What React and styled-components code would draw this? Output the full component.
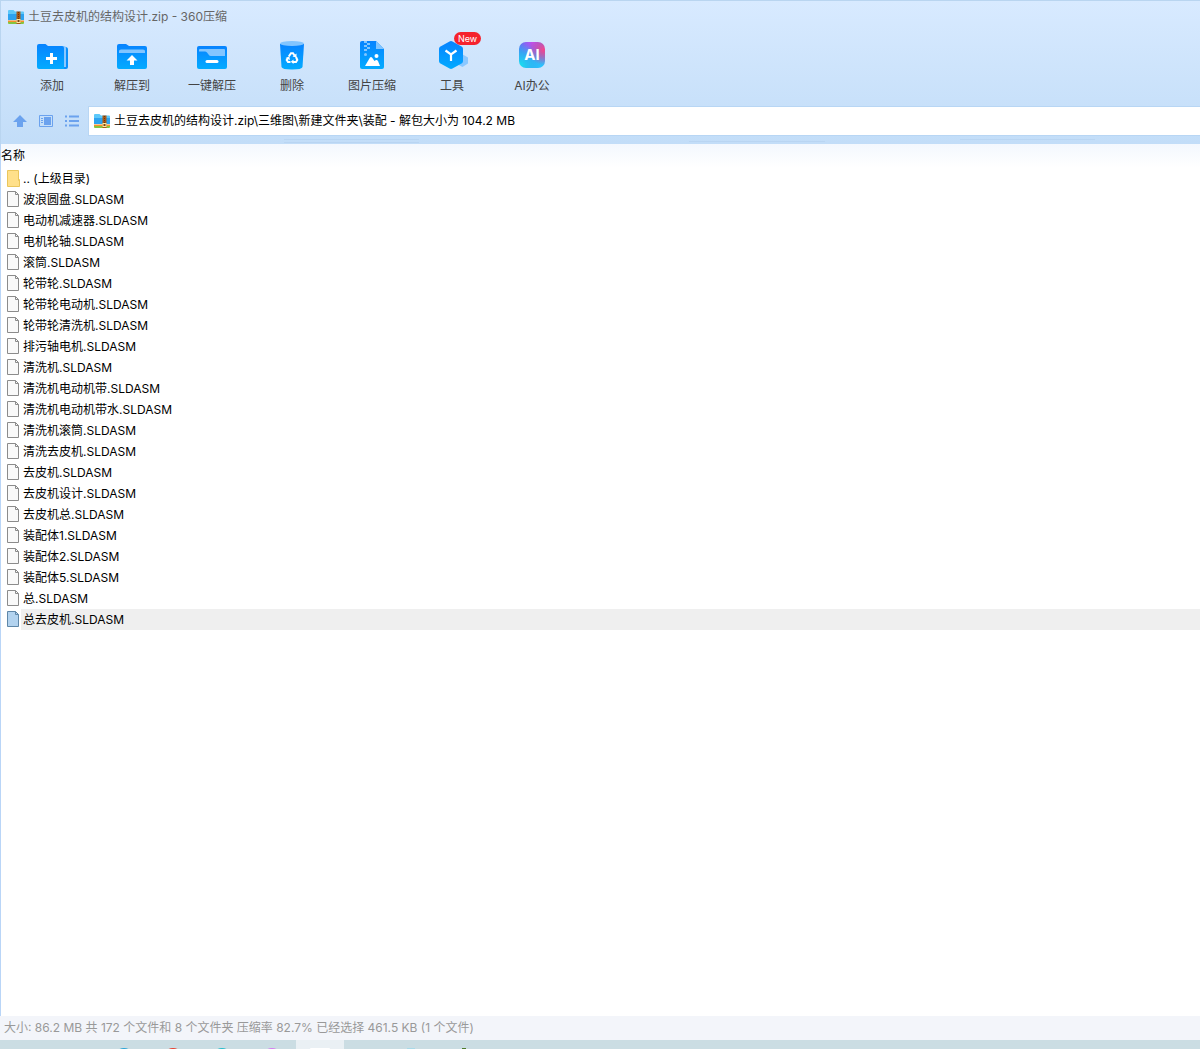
import React from 'react';
import styled, { createGlobalStyle } from 'styled-components';

const files = [
  '波浪圆盘.SLDASM',
  '电动机减速器.SLDASM',
  '电机轮轴.SLDASM',
  '滚筒.SLDASM',
  '轮带轮.SLDASM',
  '轮带轮电动机.SLDASM',
  '轮带轮清洗机.SLDASM',
  '排污轴电机.SLDASM',
  '清洗机.SLDASM',
  '清洗机电动机带.SLDASM',
  '清洗机电动机带水.SLDASM',
  '清洗机滚筒.SLDASM',
  '清洗去皮机.SLDASM',
  '去皮机.SLDASM',
  '去皮机设计.SLDASM',
  '去皮机总.SLDASM',
  '装配体1.SLDASM',
  '装配体2.SLDASM',
  '装配体5.SLDASM',
  '总.SLDASM',
  '总去皮机.SLDASM',
];

const selectedFile = '总去皮机.SLDASM';

const ZipIcon = () => (
  <svg width="16" height="16" viewBox="0 0 16 16" aria-hidden="true">
    <path d="M0 2Q0 1 1 1H5.500L7 2.500H15Q16 2.500 16 3.500V11H0Z" fill="#5cc8fa" />
    <path d="M0 5H16V11H0Z" fill="#2da3f0" />
    <path d="M0 11.500H16V13H0Z" fill="#f7902a" />
    <path d="M0 13H16V14Q16 15 15 15H1Q0 15 0 14Z" fill="#86c440" />
    <path d="M8.500 2.500H12.500V15H8.500Z" fill="#a85a18" />
    <path d="M10.500 3V10" stroke="#6b3510" strokeDasharray="1 1" />
    <rect x="9" y="10.500" width="3" height="3" fill="#7a4312" stroke="#ffe9a0" />
  </svg>
);

const BlueFill = ({ id }) => (
  <defs>
    <linearGradient id={id} x1="0" y1="0" x2="0" y2="1">
      <stop offset="0" stopColor="#0783ff" />
      <stop offset="1" stopColor="#03abff" />
    </linearGradient>
  </defs>
);

const AddIcon = () => (
  <svg width="32" height="32" viewBox="0 0 32 32" aria-hidden="true">
    <BlueFill id="add" />
    <path d="M27 7H29.500Q32 7 32 9.500V27Q32 29 30 29H26Z" fill="#0b90fb" />
    <path d="M25 6H28Q30 6 30 8V27H28Z" fill="#8bc8ff" />
    <path d="M1 6Q1 4 3 4H9.500L12 6H26Q28 6 28 8V29H3Q1 29 1 27Z" fill="url(#add)" />
    <path d="M10 18.500H21M15.500 13V24" stroke="#fff" strokeWidth="3" />
  </svg>
);

const ExtractIcon = () => (
  <svg width="32" height="32" viewBox="0 0 32 32" aria-hidden="true">
    <BlueFill id="extract" />
    <path d="M1 6Q1 4 3 4H10L13 6H29Q31 6 31 8V27Q31 29 29 29H3Q1 29 1 27Z" fill="url(#extract)" />
    <path d="M3 13V11Q3 9.500 5 9.500H27Q29 9.500 29 11V13H3Z" fill="#82c5ff" />
    <path d="M16 15L21.500 20.500H18V25H14V20.500H10.500Z" fill="#fff" />
  </svg>
);

const OneKeyIcon = () => (
  <svg width="32" height="32" viewBox="0 0 32 32" aria-hidden="true">
    <BlueFill id="onekey" />
    <rect x="1" y="6" width="30" height="23" rx="2" fill="url(#onekey)" />
    <path d="M3 11V10Q3 9 4 9H28Q29 9 29 10V16H15Q13.500 16 12.500 14.500L11 12.500Q10 11.500 9 11.500H3Z" fill="#82c5ff" />
    <path d="M11 21.500H21" stroke="#fff" strokeWidth="3" strokeLinecap="round" />
  </svg>
);

const DeleteIcon = () => (
  <svg width="32" height="32" viewBox="0 0 32 32" aria-hidden="true">
    <BlueFill id="delete" />
    <path d="M4 4H28L26.500 27Q26 29.500 16 29.500Q6 29.500 5.500 27Z" fill="url(#delete)" />
    <ellipse cx="16" cy="3.500" rx="12" ry="2.500" fill="#82c5ff" />
    <g fill="none" stroke="#fff" strokeWidth="2">
      <path d="M12.800 16.500L15 13.200H17L18.500 15.500" />
      <path d="M20 17L21.300 20L20 22H16.500" />
      <path d="M14.500 22H12L10.700 20L12 18" />
    </g>
    <path d="M16.500 16.500L20.500 13.500V17.500ZM17.500 19.500V24L14.800 21.800ZM9.500 18L13.300 16.500L14 20Z" fill="#fff" />
  </svg>
);

const ImageIcon = () => (
  <svg width="32" height="32" viewBox="0 0 32 32" aria-hidden="true">
    <BlueFill id="image" />
    <path d="M4 3Q4 1 6 1H20L28 9V27Q28 29 26 29H6Q4 29 4 27Z" fill="url(#image)" />
    <path d="M20 1L28 9H20Z" fill="#82c5ff" />
    <path d="M8 1H11V3H8ZM11 3H14V5H11ZM8 5H11V7H8ZM11 7H14V9H11ZM8 9H11V11H8Z" fill="#82c5ff" />
    <circle cx="9.500" cy="14.500" r="1.500" fill="#82c5ff" />
    <path d="M9 26L14 17.500Q15 16.500 16 17.500L18.500 21L20 20Q21 19.500 22 21L24 26Z" fill="#fff" />
    <circle cx="20.500" cy="16" r="2" fill="#fff" />
  </svg>
);

const ToolsIcon = () => (
  <svg width="32" height="32" viewBox="0 0 32 32" aria-hidden="true">
    <BlueFill id="tools" />
    <path d="M26 14L32 17.500V23.500L26.500 27L20 23.500Z" fill="#8bc8ff" />
    <path d="M13.500 1.500Q15 .7 16.500 1.500L26 6.800Q27 7.500 27 9V21Q27 22.500 26 23.200L16.500 28.500Q15 29.300 13.500 28.500L4 23.200Q3 22.500 3 21V9Q3 7.500 4 6.800Z" fill="url(#tools)" />
    <path d="M9.500 10.500L15 14.500L20.500 10.500M15 14.500V21" fill="none" stroke="#fff" strokeWidth="2.200" />
  </svg>
);

const FileIcon = ({ selected }) => (
  <svg width="12" height="16" viewBox="0 0 12 16" aria-hidden="true">
    <path d="M.5 .5H8.500L11.500 3.500V15.500H.5Z" fill={selected ? '#b3d3ef' : '#f9f9f9'} stroke={selected ? '#5f87a8' : '#8b8b8b'} />
    <path d="M8.500 .5V3.500H11.500" fill="none" stroke={selected ? '#5f87a8' : '#8b8b8b'} />
  </svg>
);

const FolderIcon = () => (
  <svg width="14" height="17" viewBox="0 0 14 17" aria-hidden="true">
    <path d="M.5 .5H11.500V10.500L12.500 9.500V16.500H.5Z" fill="#ffe08a" stroke="#eac65c" />
  </svg>
);

const UpIcon = () => (
  <svg width="14" height="14" viewBox="0 0 14 14" aria-hidden="true">
    <path d="M7 1L14 8H10V13H4V8H0Z" fill="#6ba2ee" />
  </svg>
);

const PreviewIcon = () => (
  <svg width="14" height="14" viewBox="0 0 14 14" aria-hidden="true">
    <path d="M.5 1.500H13.500V12.500H.5Z" fill="none" stroke="#6ba2ee" />
    <path d="M2 4.500H4M2 6.500H4M2 8.500H4" stroke="#6ba2ee" />
    <path d="M5 3H12V11H5Z" fill="#6ba2ee" />
  </svg>
);

const ListIcon = () => (
  <svg width="14" height="14" viewBox="0 0 14 14" aria-hidden="true">
    <path d="M0 2.500H2M0 7H2M0 11.500H2M4 2.500H14M4 7H14M4 11.500H14" stroke="#6ba2ee" strokeWidth="2" />
  </svg>
);

const tools = [
  { label: '添加', icon: <AddIcon /> },
  { label: '解压到', icon: <ExtractIcon /> },
  { label: '一键解压', icon: <OneKeyIcon /> },
  { label: '删除', icon: <DeleteIcon /> },
  { label: '图片压缩', icon: <ImageIcon /> },
  { label: '工具', icon: <ToolsIcon />, badge: 'New' },
];

const App = () => (
  <Window>
    <GlobalStyle />
    <Header>
      <TitleBar>
        <ZipIcon />
        <Title>土豆去皮机的结构设计.zip - 360压缩</Title>
      </TitleBar>
      <Toolbar>
        {tools.map(({ label, icon, badge }) => (
          <ToolButton key={label} type="button">
            {icon}
            {label}
            {badge && <Badge>{badge}</Badge>}
          </ToolButton>
        ))}
        <ToolButton type="button">
          <AiTile><AiLogo aria-hidden="true">AI</AiLogo></AiTile>
          AI办公
        </ToolButton>
      </Toolbar>
      <AddressRow>
        <NavButtons>
          <NavButton type="button" aria-label="上级目录"><UpIcon /></NavButton>
          <NavButton type="button" aria-label="预览"><PreviewIcon /></NavButton>
          <NavButton type="button" aria-label="列表"><ListIcon /></NavButton>
        </NavButtons>
        <AddressBox>
          <ZipIcon />
          <AddressInput
            aria-label="路径"
            defaultValue="土豆去皮机的结构设计.zip\三维图\新建文件夹\装配 - 解包大小为 104.2 MB"
          />
        </AddressBox>
      </AddressRow>
      <svg width="100%" height="8" aria-hidden="true">
        <path d="M283 3.500H418M283 6.500H418M688 5.500H824M959 3.500H1094" stroke="#b9d5f2" />
      </svg>
    </Header>
    <Content>
      <FileTable>
        <thead>
          <tr><HeadCell scope="col">名称</HeadCell></tr>
        </thead>
        <tbody>
          <tr>
            <FileCell>
              <FileName><IconSlot><FolderIcon /></IconSlot><Label>.. (上级目录)</Label></FileName>
            </FileCell>
          </tr>
          {files.map((name) => (
            <tr key={name}>
              <FileCell>
                <FileName>
                  <IconSlot><FileIcon selected={name === selectedFile} /></IconSlot>
                  <Label $selected={name === selectedFile}>{name}</Label>
                </FileName>
              </FileCell>
            </tr>
          ))}
        </tbody>
      </FileTable>
    </Content>
    <StatusBar>大小: 86.2 MB 共 172 个文件和 8 个文件夹 压缩率 82.7% 已经选择 461.5 KB (1 个文件)</StatusBar>
    <Taskbar>
      <svg width="480" height="9" viewBox="0 0 480 9" aria-hidden="true">
        <rect x="296" width="48" height="9" fill="#eaf0f4" />
        <circle cx="124" cy="18" r="10" fill="#2ba4d6" />
        <circle cx="173" cy="18" r="10" fill="#e8402f" />
        <circle cx="222" cy="18" r="10" fill="#27bccb" />
        <circle cx="272" cy="18" r="10" fill="#d57cf0" />
        <rect x="310" y="8" width="20" height="4" rx="1" fill="#fff" />
        <rect x="407" y="8" width="8" height="1" fill="#a9d9e8" />
        <rect x="462" y="8" width="4" height="1" fill="#4c7a2c" />
      </svg>
    </Taskbar>
  </Window>
);

const GlobalStyle = createGlobalStyle`
  * {
    box-sizing: border-box;
  }

  body {
    margin: 0;
  }

  body, button, input {
    font-family: Inter, "Noto Sans CJK SC", sans-serif;
    font-size: 12px;
    line-height: 16px;
  }

  svg {
    display: block;
    flex: none;
  }
`;

const Window = styled.div`
  display: flex;
  flex-direction: column;
  min-height: 100vh;
  background: #fff;
`;

const Header = styled.header`
  background: linear-gradient(#d8eaff, #c2ddf8);
  border-top: 1px solid #b9d5f0;
  border-left: 1px solid #b9d5f0;
`;

const TitleBar = styled.div`
  display: flex;
  align-items: center;
  gap: 4px;
  height: 31px;
  padding-left: 7px;
`;

const Title = styled.h1`
  margin: 0;
  color: #666;
  font-size: 12px;
  font-weight: 400;
`;

const Toolbar = styled.div`
  display: flex;
  padding: 8px 0 12px 11px;
`;

const ToolButton = styled.button`
  position: relative;
  display: flex;
  flex-direction: column;
  align-items: center;
  gap: 6px;
  width: 80px;
  padding: 0;
  border: 0;
  background: none;
  color: #444;
`;

const Badge = styled.span`
  position: absolute;
  top: -8px;
  left: 42px;
  padding: 0 4px;
  border-radius: 7px;
  background: #f5222d;
  color: #fff;
  font-size: 9px;
  line-height: 13px;
`;

const AiTile = styled.span`
  display: flex;
  align-items: center;
  height: 32px;
  padding-bottom: 2px;
`;

const AiLogo = styled.span`
  display: flex;
  align-items: center;
  justify-content: center;
  width: 26px;
  height: 26px;
  border-radius: 7px;
  background:
    radial-gradient(circle at 95% 30%, #f6468c, transparent 50%),
    radial-gradient(circle at 5% 90%, #18dff0, transparent 65%),
    radial-gradient(circle at 90% 95%, #27c8ff, transparent 50%),
    radial-gradient(circle at 50% 0%, #c050f0, transparent 50%),
    #4b7cf5;
  color: #fff;
  font-size: 15px;
  font-weight: 700;
`;

const AddressRow = styled.div`
  display: flex;
  align-items: center;
`;

const NavButtons = styled.div`
  display: flex;
  gap: 12px;
  padding: 0 9px 0 12px;
`;

const NavButton = styled.button`
  padding: 0;
  border: 0;
  background: none;
`;

const AddressBox = styled.div`
  display: flex;
  flex: 1;
  align-items: center;
  gap: 4px;
  height: 30px;
  padding-left: 5px;
  border: 1px solid #b8d6f4;
  border-right: 0;
  background: #fff;
`;

const AddressInput = styled.input`
  flex: 1;
  min-width: 0;
  padding: 0;
  border: 0;
  outline: 0;
  background: none;
  color: #000;
`;

const Content = styled.main`
  flex: 1;
  border-left: 1px solid #b9d5f7;
`;

const FileTable = styled.table`
  width: 100%;
  border-collapse: collapse;
`;

const HeadCell = styled.th`
  height: 24px;
  padding: 0;
  background: linear-gradient(#f3f8fe, #fff);
  font-weight: 400;
  text-align: left;
`;

const FileCell = styled.td`
  padding: 0;
`;

const FileName = styled.div`
  display: flex;
  height: 21px;
`;

const IconSlot = styled.span`
  width: 20px;
  padding: 2px 0 0 6px;
`;

const Label = styled.span`
  flex: 1;
  padding-left: 2px;
  background: ${({ $selected }) => ($selected ? '#efefef' : 'none')};
  line-height: 21px;
`;

const StatusBar = styled.footer`
  padding: 0 4px;
  background: #f3f5fa;
  color: #999;
  line-height: 24px;
`;

const Taskbar = styled.div`
  height: 9px;
  overflow: hidden;
  background: #cbdde3;
`;

export default App;
